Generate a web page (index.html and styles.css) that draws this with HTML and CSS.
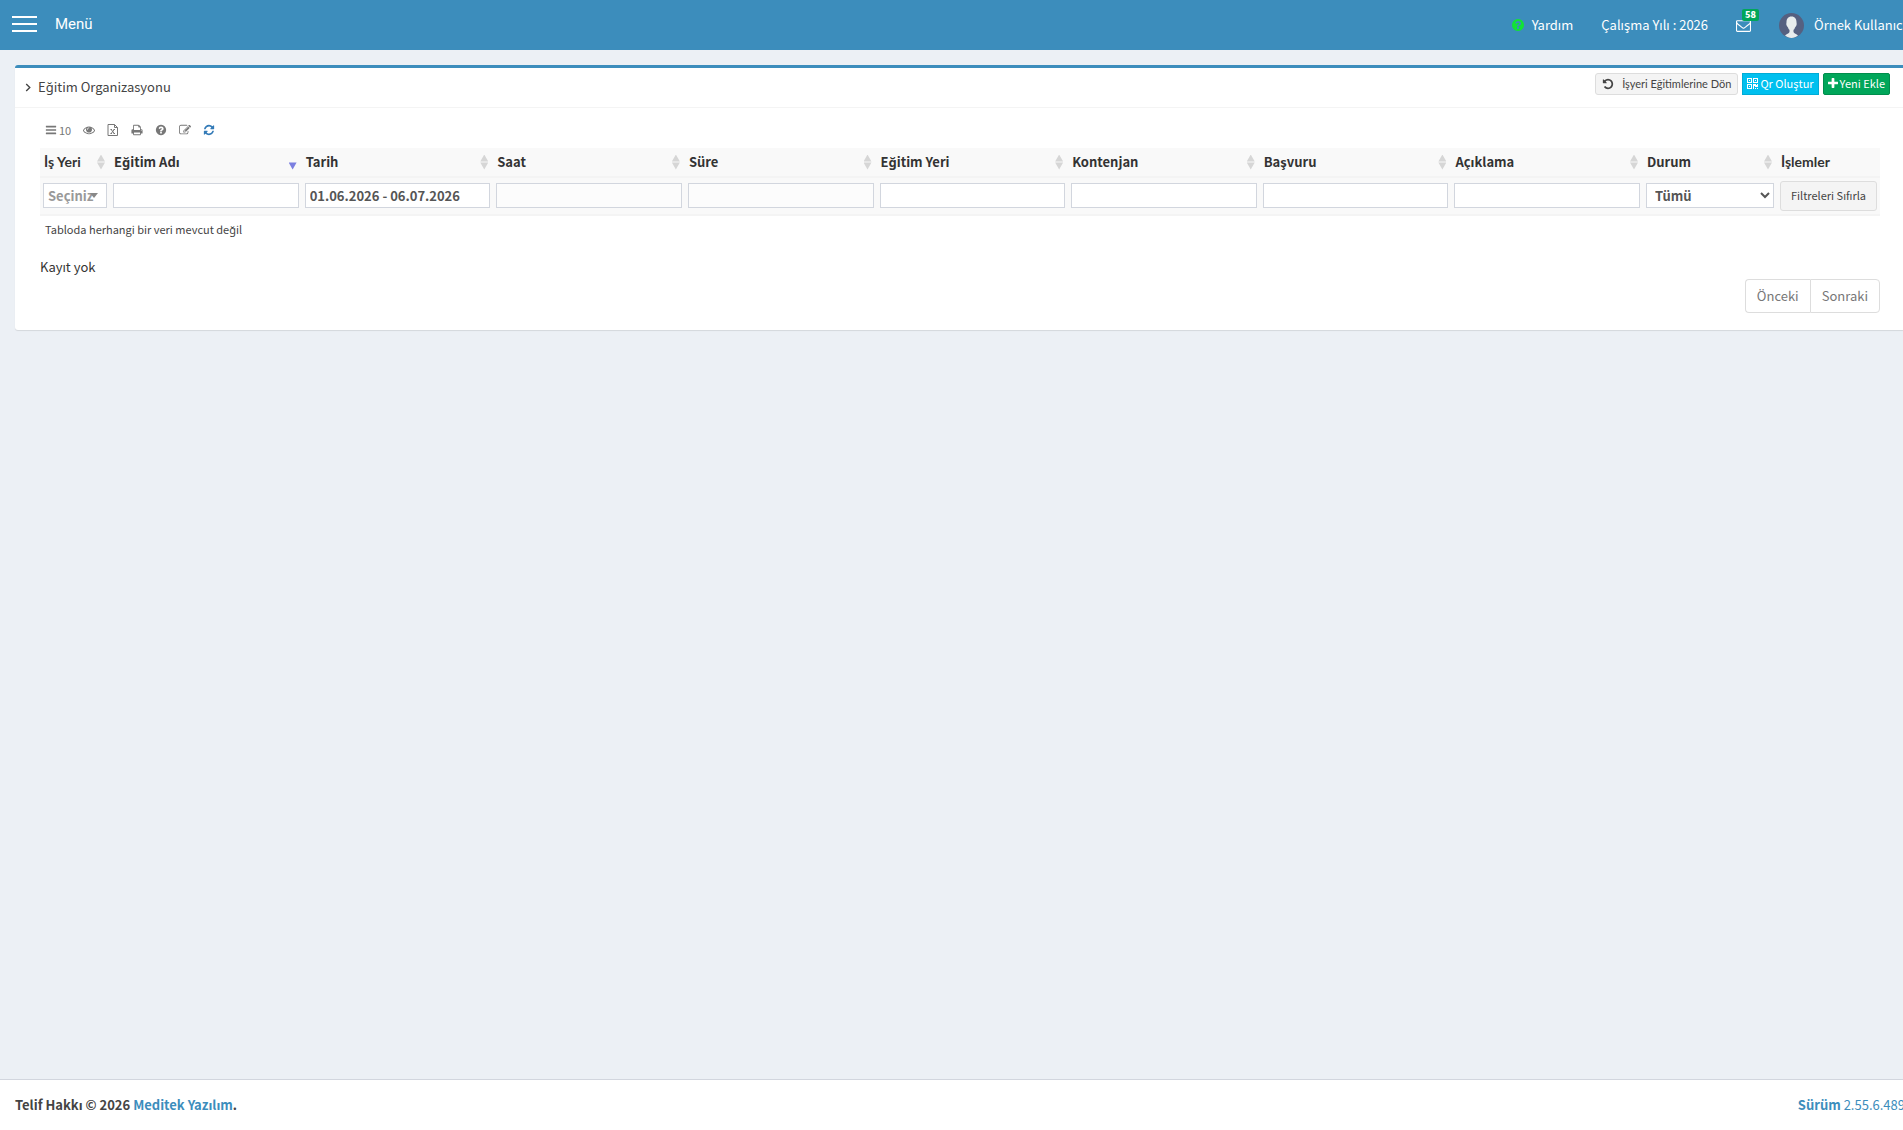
FILE: index.html
```html
<!DOCTYPE html>
<html lang="tr">
<head>
    <meta charset="UTF-8">
    <meta name="viewport" content="width=device-width, initial-scale=1.0">
    <title>Eğitim Organizasyonu</title>
    <link rel="stylesheet" href="styles.css">
</head>
<body>
    <div class="wrapper">
        <header class="main-header">
            <button type="button" class="menu-toggle">
                <span class="menu-bars"><i></i><i></i><i></i></span>
                Menü
            </button>
            <nav class="navbar">
                <a href="#" class="nav-link">
                    <svg class="icon help-icon" viewBox="0 0 1792 1792"><path d="M1024 1376v-192q0-14-9-23t-23-9h-192q-14 0-23 9t-9 23v192q0 14 9 23t23 9h192q14 0 23-9t9-23zm256-672q0-88-55.5-163t-138.5-116-170-41q-243 0-371 213-15 24 8 42l132 100q7 6 19 6 16 0 25-12 53-68 86-92 34-24 86-24 48 0 85.5 26t37.5 59q0 38-20 61t-68 45q-63 28-115.5 86.5t-52.5 125.5v36q0 14 9 23t23 9h192q14 0 23-9t9-23q0-19 21.5-49.5t54.5-49.5q32-18 49-28.5t46-35 44.5-48 28-60.5 12.5-81zm384 192q0 209-103 385.5t-279.5 279.5-385.5 103-385.5-103-279.5-279.5-103-385.5 103-385.5 279.5-279.5 385.5-103 385.5 103 279.5 279.5 103 385.5z"/></svg>
                    Yardım
                </a>
                <a href="#" class="nav-link">Çalışma Yılı : 2026</a>
                <a href="#" class="nav-link mail-link">
                    <svg class="icon mail-icon" viewBox="0 0 1792 1792"><path d="M1664 1504v-768q-32 36-69 66-268 206-426 338-51 43-83 67t-86.5 48.5-102.5 24.5h-2q-48 0-102.5-24.5t-86.5-48.5-83-67q-158-132-426-338-37-30-69-66v768q0 13 9.5 22.5t22.5 9.5h1472q13 0 22.5-9.5t9.5-22.5zm0-1051v-24.5l-.5-13-3-12.5-5.5-9-9-7.5-14-2.5h-1472q-13 0-22.5 9.5t-9.5 22.5q0 168 147 284 193 152 401 317 6 5 35 29.5t46 37.5 44.5 31.5 50.5 27.5 43 9h2q20 0 43-9t50.5-27.5 44.5-31.5 46-37.5 35-29.5q208-165 401-317 54-43 100.5-115.5t46.5-131.5zm128-37v1088q0 66-47 113t-113 47h-1472q-66 0-113-47t-47-113v-1088q0-66 47-113t113-47h1472q66 0 113 47t47 113z"/></svg>
                    <span class="badge">58</span>
                </a>
                <a href="#" class="nav-link user-link">
                    <svg class="avatar" viewBox="0 0 50 50">
                        <circle cx="25" cy="25" r="25" fill="#556080"/>
                        <path d="M25 7c-7 0-10 5-10 11 0 3-1 4 0 6 1 3 2 3 3 5 1 3 2 4 3 5v4c-1 3-6 4-9 7 4 3 8 5 13 5s9-2 13-5c-3-3-8-4-9-7v-4c1-1 2-2 3-5 1-2 2-2 3-5 1-2 0-3 0-6 0-6-3-11-10-11z" fill="#e7eced"/>
                    </svg>
                    Örnek Kullanıcı
                </a>
            </nav>
        </header>

        <main class="content">
            <section class="box">
                <div class="box-header">
                    <h3 class="box-title">
                        <svg class="chevron" viewBox="0 0 6 10"><path d="M1 1l4 4-4 4"/></svg>
                        Eğitim Organizasyonu
                    </h3>
                    <div class="box-tools">
                        <button type="button" class="btn btn-default btn-back">
                            <svg class="icon" viewBox="0 0 1792 1792"><path d="M1664 896q0 156-61 298t-164 245-245 164-298 61q-172 0-327-72.5t-264-204.5q-7-10-6.5-22.5t8.5-20.5l137-138q10-9 25-9 16 2 23 12 73 95 179 147t225 52q104 0 198.5-40.5t163.5-109.5 109.5-163.5 40.5-198.5-40.5-198.5-109.5-163.5-163.5-109.5-198.5-40.5q-98 0-188 35.5t-160 101.5l137 138q31 30 14 69-17 40-59 40h-448q-26 0-45-19t-19-45v-448q0-42 40-59 39-17 69 14l130 129q107-101 244.5-156.5t284.5-55.5q156 0 298 61t245 164 164 245 61 298z"/></svg>
                            İşyeri Eğitimlerine Dön
                        </button>
                        <button type="button" class="btn btn-info">
                            <svg class="icon qr-icon" viewBox="0 0 11 11"><path fill-rule="evenodd" d="M0 0h5v5h-5zM1 1v3h3v-3zM6 0h5v5h-5zM7 1v3h3v-3zM0 6h5v5h-5zM1 7v3h3v-3zM2 2h1v1h-1zM8 2h1v1h-1zM2 8h1v1h-1zM6 6h3v1h1v-1h1v3h-3v-1h-1v3h-1zM8 10h1v1h-1zM10 10h1v1h-1z"/></svg>
                            Qr Oluştur
                        </button>
                        <button type="button" class="btn btn-success">
                            <svg class="icon plus-icon" viewBox="192 128 1408 1408"><path d="M1600 736v192q0 40-28 68t-68 28h-416v416q0 40-28 68t-68 28h-192q-40 0-68-28t-28-68v-416h-416q-40 0-68-28t-28-68v-192q0-40 28-68t68-28h416v-416q0-40 28-68t68-28h192q40 0 68 28t28 68v416h416q40 0 68 28t28 68z"/></svg>
                            Yeni Ekle
                        </button>
                    </div>
                </div>

                <div class="box-body">
                    <div class="table-tools">
                        <button type="button" class="tool tool-length">
                            <svg class="icon" viewBox="0 0 1792 1792"><path d="M1664 1344v128q0 26-19 45t-45 19h-1408q-26 0-45-19t-19-45v-128q0-26 19-45t45-19h1408q26 0 45 19t19 45zm0-512v128q0 26-19 45t-45 19h-1408q-26 0-45-19t-19-45v-128q0-26 19-45t45-19h1408q26 0 45 19t19 45zm0-512v128q0 26-19 45t-45 19h-1408q-26 0-45-19t-19-45v-128q0-26 19-45t45-19h1408q26 0 45 19t19 45z"/></svg>
                            10
                        </button>
                        <button type="button" class="tool" aria-label="Sütunlar">
                            <svg class="icon" viewBox="0 0 1792 1792"><path d="M1664 960q-152-236-381-353 61 104 61 225 0 185-131.5 316.5t-316.5 131.5-316.5-131.5-131.5-316.5q0-121 61-225-229 117-381 353 133 205 333.5 326.5t434.5 121.5 434.5-121.5 333.5-326.5zm-720-384q0-20-14-34t-34-14q-125 0-214.5 89.5t-89.5 214.5q0 20 14 34t34 14 34-14 14-34q0-86 61-147t147-61q20 0 34-14t14-34zm848 384q0 34-20 69-140 230-376.5 368.5t-499.5 138.5-499.5-139-376.5-368q-20-35-20-69t20-69q140-229 376.5-368t499.5-139 499.5 139 376.5 368q20 35 20 69z"/></svg>
                        </button>
                        <button type="button" class="tool" aria-label="Excel">
                            <svg class="icon icon-line" viewBox="0 0 12 12"><path d="M1 .5h6.500l3 3v8h-9.500zM7.500 .5v3h3M3.500 5.500h1.500M6.500 5.500h1.500M3.500 9.500h1.500M6.500 9.500h1.500M4.200 5.500l3 4M7.200 5.500l-3 4"/></svg>
                        </button>
                        <button type="button" class="tool" aria-label="Yazdır">
                            <svg class="icon" viewBox="0 0 1792 1792"><path d="M448 1536h896v-256h-896v256zm0-640h896v-384h-160q-40 0-68-28t-28-68v-160h-640v640zm1152 64q0-26-19-45t-45-19-45 19-19 45 19 45 45 19 45-19 19-45zm128 0v416q0 13-9.500 22.500t-22.500 9.500h-224v160q0 40-28 68t-68 28h-960q-40 0-68-28t-28-68v-160h-224q-13 0-22.500-9.500t-9.500-22.500v-416q0-79 56.500-135.500t135.500-56.500h64v-544q0-40 28-68t68-28h672q40 0 88 20t76 48l152 152q28 28 48 76t20 88v256h64q79 0 135.500 56.500t56.500 135.500z"/></svg>
                        </button>
                        <button type="button" class="tool" aria-label="Yardım">
                            <svg class="icon" viewBox="0 0 1792 1792"><path d="M1024 1376v-192q0-14-9-23t-23-9h-192q-14 0-23 9t-9 23v192q0 14 9 23t23 9h192q14 0 23-9t9-23zm256-672q0-88-55.5-163t-138.5-116-170-41q-243 0-371 213-15 24 8 42l132 100q7 6 19 6 16 0 25-12 53-68 86-92 34-24 86-24 48 0 85.5 26t37.5 59q0 38-20 61t-68 45q-63 28-115.5 86.5t-52.5 125.5v36q0 14 9 23t23 9h192q14 0 23-9t9-23q0-19 21.5-49.5t54.5-49.5q32-18 49-28.5t46-35 44.5-48 28-60.5 12.5-81zm384 192q0 209-103 385.5t-279.5 279.5-385.5 103-385.5-103-279.5-279.5-103-385.5 103-385.5 279.5-279.5 385.5-103 385.5 103 279.5 279.5 103 385.5z"/></svg>
                        </button>
                        <button type="button" class="tool" aria-label="Düzenle">
                            <svg class="icon" viewBox="0 0 1792 1792"><path d="M888 1184l116-116-152-152-116 116v56h96v96h56zm440-720q-16-16-33 1l-350 350q-17 17-1 33t33-1l350-350q17-17 1-33zm80 594v190q0 119-84.5 203.5t-203.5 84.5h-832q-119 0-203.5-84.5t-84.5-203.5v-832q0-119 84.5-203.5t203.5-84.5h832q63 0 117 25 15 7 18 23 3 17-9 29l-49 49q-14 14-32 8-23-6-45-6h-832q-66 0-113 47t-47 113v832q0 66 47 113t113 47h832q66 0 113-47t47-113v-126q0-13 9-22l64-64q15-15 35-7t20 29zm-96-738l288 288-672 672h-288v-288zm444 132l-92 92-288-288 92-92q28-28 68-28t68 28l152 152q28 28 28 68t-28 68z"/></svg>
                        </button>
                        <button type="button" class="tool tool-refresh" aria-label="Yenile">
                            <svg class="icon" viewBox="0 0 1792 1792"><path d="M1639 1056q0 5-1 7-64 268-268 434.5t-478 166.5q-146 0-282.5-55t-243.5-157l-129 129q-19 19-45 19t-45-19-19-45v-448q0-26 19-45t45-19h448q26 0 45 19t19 45-19 45l-137 137q71 66 161 102t187 36q134 0 250-65t186-179q11-17 53-117 8-23 30-23h192q13 0 22.5 9.5t9.5 22.5zm25-800v448q0 26-19 45t-45 19h-448q-26 0-45-19t-19-45 19-45l138-138q-148-137-349-137-134 0-250 65t-186 179q-11 17-53 117-8 23-30 23h-199q-13 0-22.5-9.5t-9.5-22.5v-7q65-268 270-434.5t480-166.5q146 0 284 55.5t245 156.5l130-129q19-19 45-19t45 19 19 45z"/></svg>
                        </button>
                    </div>

                    <table class="data-table">
                        <colgroup>
                            <col class="col-workplace">
                            <col span="8">
                            <col class="col-status">
                            <col class="col-actions">
                        </colgroup>
                        <thead>
                            <tr class="titles">
                                <th><span class="sortable dotted-cap">İş Yeri</span></th>
                                <th><span class="sortable sorted-desc">Eğitim Adı</span></th>
                                <th><span class="sortable">Tarih</span></th>
                                <th><span class="sortable">Saat</span></th>
                                <th><span class="sortable">Süre</span></th>
                                <th><span class="sortable">Eğitim Yeri</span></th>
                                <th><span class="sortable">Kontenjan</span></th>
                                <th><span class="sortable">Başvuru</span></th>
                                <th><span class="sortable">Açıklama</span></th>
                                <th><span class="sortable">Durum</span></th>
                                <th class="dotted-cap">İşlemler</th>
                            </tr>
                            <tr class="filters">
                                <td>
                                    <div class="select-wrap">
                                        <select class="filter filter-workplace" aria-label="İş Yeri"><option>Seçiniz</option></select>
                                    </div>
                                </td>
                                <td><input type="text" class="filter" aria-label="Eğitim Adı"></td>
                                <td><input type="text" class="filter" aria-label="Tarih" value="01.06.2026 - 06.07.2026"></td>
                                <td><input type="text" class="filter" aria-label="Saat" disabled></td>
                                <td><input type="text" class="filter" aria-label="Süre" disabled></td>
                                <td><input type="text" class="filter" aria-label="Eğitim Yeri"></td>
                                <td><input type="text" class="filter" aria-label="Kontenjan"></td>
                                <td><input type="text" class="filter" aria-label="Başvuru"></td>
                                <td><input type="text" class="filter" aria-label="Açıklama"></td>
                                <td><select class="filter" aria-label="Durum"><option>Tümü</option></select></td>
                                <td><button type="button" class="btn btn-default btn-reset">Filtreleri Sıfırla</button></td>
                            </tr>
                        </thead>
                        <tbody>
                            <tr>
                                <td colspan="11" class="empty">Tabloda herhangi bir veri mevcut değil</td>
                            </tr>
                        </tbody>
                    </table>

                    <div class="table-info">Kayıt yok</div>
                    <div class="pagination">
                        <a href="#">Önceki</a>
                        <a href="#">Sonraki</a>
                    </div>
                </div>
            </section>
        </main>

        <footer class="main-footer">
            <strong>Telif Hakkı © 2026 <a href="#">Meditek Yazılım</a>.</strong>
            <a href="#"><b>Sürüm</b> 2.55.6.489</a>
        </footer>
    </div>
</body>
</html>
```
FILE: styles.css
```css
* {
    box-sizing: border-box;
}
body {
    margin: 0;
    overflow: hidden;
    background-color: #ecf0f5;
    color: #333;
    font-family: "Noto Sans CJK JP", "Noto Sans", sans-serif;
    font-size: 13px;
    line-height: 20px;
}
a {
    color: #3c8dbc;
    text-decoration: none;
}
button, input, select {
    font-family: inherit;
    color: inherit;
}
button {
    cursor: pointer;
}
.icon {
    width: 12px;
    height: 12px;
    fill: currentColor;
    flex: none;
}
/* runs under the scrollbar gutter */
.wrapper {
    width: calc(100% + 17px);
    min-height: 100vh;
    display: flex;
    flex-direction: column;
}

/* header */
.main-header {
    display: flex;
    justify-content: space-between;
    height: 50px;
    padding-left: 12px;
    background-color: #3c8dbc;
    color: #fff;
}
.menu-toggle {
    display: flex;
    align-items: center;
    gap: 18px;
    padding: 0 0 2px;
    background: none;
    border: none;
    font-family: Roboto, sans-serif;
    font-size: 15px;
}
.menu-bars {
    display: flex;
    flex-direction: column;
    gap: 5px;
    width: 25px;
}
.menu-bars i {
    height: 2px;
    background-color: #fff;
}
.navbar {
    display: flex;
}
.nav-link {
    display: flex;
    align-items: center;
    padding: 0 14px;
    color: #fff;
}
.help-icon {
    width: 14px;
    height: 14px;
    margin-right: 7px;
    color: #12e236;
}
.mail-link {
    position: relative;
}
.mail-icon {
    width: 15px;
    height: 15px;
}
.badge {
    position: absolute;
    top: 9px;
    right: 6px;
    padding: 0 3px;
    border-radius: 2px;
    background-color: #00a65a;
    font-size: 9px;
    font-weight: 900;
    line-height: 12px;
}
.avatar {
    width: 25px;
    height: 25px;
    margin-right: 10px;
}

/* box */
.content {
    flex: 1;
    padding: 15px;
}
.box {
    background-color: #fff;
    border-top: 3px solid #3c8dbc;
    border-radius: 3px;
    box-shadow: 0 1px 1px rgba(0,0,0,0.1);
}
.box-header {
    display: flex;
    justify-content: space-between;
    align-items: flex-start;
    height: 40px;
    padding: 5px 10px;
    border-bottom: 1px solid #f4f4f4;
}
.box-title {
    display: flex;
    align-items: center;
    gap: 7px;
    margin: 4px 0 0;
    color: #444;
    font-size: 13px;
    font-weight: normal;
}
.chevron {
    width: 6px;
    height: 9px;
    fill: none;
    stroke: #444;
    stroke-width: 1.5;
}
.box-tools {
    display: flex;
    gap: 4px;
    padding-right: 5px;
}
.btn {
    display: flex;
    align-items: center;
    gap: 2px;
    height: 22px;
    padding: 0 4px 2px;
    border: 1px solid #ddd;
    font-size: 11px;
    line-height: 18px;
    white-space: nowrap;
}
.btn-default {
    background-color: #f4f4f4;
    border-radius: 3px;
    color: #444;
}
.dotted-cap,
.btn-back {
    font-family: Lato, sans-serif;
}
.dotted-cap {
    font-size: 14px;
}
.btn-back {
    gap: 8px;
    padding: 0 6px;
}
.btn-info {
    background-color: #00c0ef;
    border-color: #00acd6;
    color: #fff;
}
.qr-icon {
    width: 11px;
    height: 11px;
}
.btn-success {
    background-color: #00a65a;
    border-color: #008d4c;
    border-radius: 2px;
    color: #fff;
}
.plus-icon {
    width: 10px;
    height: 10px;
}
.box-body {
    padding: 12px 25px 17px;
}

/* table toolbar */
.table-tools {
    display: flex;
    gap: 12px;
    padding: 0 5px;
    margin-bottom: 8px;
}
.tool {
    display: flex;
    align-items: center;
    gap: 2px;
    height: 20px;
    padding: 0;
    background: none;
    border: none;
    color: #777;
    font-size: 11px;
}
.tool-refresh {
    color: #337ab7;
}
.icon-line {
    fill: none;
    stroke: currentColor;
}

/* table */
.data-table {
    width: 100%;
    table-layout: fixed;
    border-spacing: 0;
}
.col-workplace {
    width: 70px;
}
.col-status {
    width: 134px;
}
.col-actions {
    width: 103px;
}
.data-table thead {
    background-color: #f9f9f9;
}
.data-table th {
    height: 30px;
    padding: 0 5px 0 4px;
    border-bottom: 2px solid #f4f4f4;
    text-align: left;
    white-space: nowrap;
}
.sortable {
    display: flex;
    align-items: center;
    justify-content: space-between;
}
.sortable::after {
    content: "";
    width: 8px;
    height: 15px;
    background-color: #d6d6d6;
    clip-path: polygon(50% 0, 100% 46%, 0 46%, 0 54%, 100% 54%, 50% 100%, 0 54%, 0 46%);
}
.sortable.sorted-desc::after {
    background-color: #7b7fe0;
    clip-path: polygon(0 54%, 100% 54%, 50% 100%);
}
.filters td {
    height: 38px;
    padding: 3px;
    border-bottom: 2px solid #f4f4f4;
    vertical-align: top;
}
.filter {
    display: block;
    width: 100%;
    height: 25px;
    margin: 2px 0 0;
    padding: 0 4px;
    background-color: #fff;
    border: 1px solid #d2d6de;
    border-radius: 0;
    color: #555;
    font-size: 13px;
    font-weight: bold;
}
.filter:disabled {
    background-color: #fcfcfc;
}
.select-wrap {
    position: relative;
}
.select-wrap::after {
    content: "";
    position: absolute;
    top: 10px;
    right: 9px;
    border: 4px solid transparent;
    border-top: 5px solid #888;
    border-bottom: none;
}
.filter-workplace {
    appearance: none;
    color: #999;
}
.btn-reset {
    height: 30px;
    padding: 0 10px 2px;
}
.data-table .empty {
    padding: 4px 5px 6px;
    color: #444;
    font-size: 11px;
    line-height: 18px;
}
.table-info {
    padding-top: 13px;
}
.pagination {
    display: flex;
    justify-content: flex-end;
    margin-top: 2px;
}
.pagination a {
    padding: 6px 11px;
    border: 1px solid #ddd;
    color: #777;
}
.pagination a:first-child {
    border-radius: 4px 0 0 4px;
    border-right: none;
}
.pagination a:last-child {
    border-radius: 0 4px 4px 0;
}

/* footer */
.main-footer {
    display: flex;
    justify-content: space-between;
    padding: 15px;
    background-color: #fff;
    border-top: 1px solid #d2d6de;
    color: #444;
}
```
